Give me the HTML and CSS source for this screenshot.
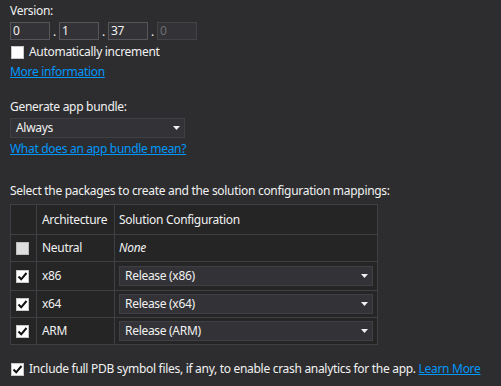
FILE: index.html
```html
<!DOCTYPE html>
<html>
<head>
<meta charset="utf-8">
<link rel="stylesheet" href="styles.css">
</head>
<body>
<div class="page">
  <div class="label">Version:</div>
  <div class="version-row">
    <span class="tb">0</span><span class="dot">.</span>
    <span class="tb">1</span><span class="dot">.</span>
    <span class="tb">37</span><span class="dot">.</span>
    <span class="tb disabled">0</span>
  </div>
  <div class="check-row auto">
    <span class="cb"></span><span>Automatically increment</span>
  </div>
  <div class="link more">More information</div>

  <div class="label gen">Generate app bundle:</div>
  <div class="combo main-combo"><span>Always</span><svg class="arrow" width="7" height="4" viewBox="0 0 7 4"><path d="M0 0H7L3.5 4Z" fill="#f1f1f1"/></svg></div>
  <div class="link bundle">What does an app bundle mean?</div>

  <div class="label sel">Select the packages to create and the solution configuration mappings:</div>
  <table class="grid">
    <tr class="hdr">
      <td class="c1"></td>
      <td class="c2">Architecture</td>
      <td class="c3">Solution Configuration</td>
    </tr>
    <tr class="r27">
      <td class="c1"><span class="cb neutral"></span></td>
      <td class="c2">Neutral</td>
      <td class="c3"><i>None</i></td>
    </tr>
    <tr class="r28">
      <td class="c1"><span class="cb checked"><svg width="11" height="11" viewBox="0 0 11 11"><path d="M1.5 5.5L4.2 8.3L9.5 2" fill="none" stroke="#111" stroke-width="2"/></svg></span></td>
      <td class="c2">x86</td>
      <td class="c3"><div class="combo"><span>Release (x86)</span><svg class="arrow" width="7" height="4" viewBox="0 0 7 4"><path d="M0 0H7L3.5 4Z" fill="#f1f1f1"/></svg></div></td>
    </tr>
    <tr class="r27">
      <td class="c1"><span class="cb checked"><svg width="11" height="11" viewBox="0 0 11 11"><path d="M1.5 5.5L4.2 8.3L9.5 2" fill="none" stroke="#111" stroke-width="2"/></svg></span></td>
      <td class="c2">x64</td>
      <td class="c3"><div class="combo"><span>Release (x64)</span><svg class="arrow" width="7" height="4" viewBox="0 0 7 4"><path d="M0 0H7L3.5 4Z" fill="#f1f1f1"/></svg></div></td>
    </tr>
    <tr class="r27">
      <td class="c1"><span class="cb checked"><svg width="11" height="11" viewBox="0 0 11 11"><path d="M1.5 5.5L4.2 8.3L9.5 2" fill="none" stroke="#111" stroke-width="2"/></svg></span></td>
      <td class="c2">ARM</td>
      <td class="c3"><div class="combo"><span>Release (ARM)</span><svg class="arrow" width="7" height="4" viewBox="0 0 7 4"><path d="M0 0H7L3.5 4Z" fill="#f1f1f1"/></svg></div></td>
    </tr>
  </table>

  <div class="check-row pdb">
    <span class="cb checked"><svg width="11" height="11" viewBox="0 0 11 11"><path d="M1.5 5.5L4.2 8.3L9.5 2" fill="none" stroke="#111" stroke-width="2"/></svg></span><span class="nowrap">Include full PDB symbol files, if any, to enable crash analytics for the app. <span class="link">Learn More</span></span>
  </div>
</div>
</body>
</html>
```
FILE: styles.css
```css
html, body {
  margin: 0;
  padding: 0;
  background: #2d2d30;
}
body {
  width: 501px;
  height: 386px;
  overflow: hidden;
}
.page {
  padding: 3px 10px 0 10px;
  font-family: "Noto Sans", sans-serif;
  font-size: 12px;
  letter-spacing: -0.3px;
  line-height: 16px;
  color: #f1f1f1;
  display: flex;
  flex-direction: column;
  align-items: flex-start;
}
.label { height: 16px; white-space: nowrap; }
.version-row {
  margin-top: 3px;
  display: flex;
  align-items: flex-end;
  height: 18px;
}
.tb {
  box-sizing: border-box;
  width: 40px;
  height: 18px;
  background: #333337;
  border: 1px solid #55555a;
  padding-left: 2px;
  line-height: 16px;
}
.tb.disabled { color: #6d6d70; border-color: #434346; }
.dot {
  width: 9px;
  text-align: center;
  line-height: 16px;
  height: 16px;
}
.check-row {
  display: flex;
  align-items: center;
  gap: 5px;
  height: 16px;
}
.check-row.auto { margin-top: 4px; padding-left: 1px; }
.cb {
  box-sizing: border-box;
  width: 13px;
  height: 13px;
  background: #ffffff;
  border: 1px solid #c8c8c8;
  display: flex;
  align-items: center;
  justify-content: center;
  flex: none;
}
.cb.neutral { background: #dedede; border-color: #bdbdbd; }
.link {
  color: #0097fb;
  text-decoration: underline;
}
.nowrap { white-space: nowrap; }
.more { margin-top: 4px; }
.gen { margin-top: 19px; }
.combo {
  box-sizing: border-box;
  height: 20px;
  background: #333337;
  border: 1px solid #3f3f46;
  display: flex;
  align-items: center;
  justify-content: space-between;
  padding: 0 4px 0 5px;
}
.main-combo { width: 175px; margin-top: 3px; }
.bundle { margin-top: 3px; }
.sel { margin-top: 26px; }
.grid {
  margin-top: 5px;
  border-collapse: collapse;
  width: 368px;
  table-layout: fixed;
}
.grid td {
  border: 1px solid #3f3f46;
  background: #252526;
  padding: 0;
  vertical-align: middle;
}
.grid .c1 { width: 25px; }
.grid .c2 { width: 78px; padding-left: 5px; box-sizing: border-box; }
.grid .c3 { padding-left: 4px; padding-right: 4px; }
.grid .c1 .cb { margin-left: 5px; }
.grid tr.hdr td { height: 29px; }
.grid tr.r27 td { height: 26px; }
.grid tr.r28 td { height: 28px; }
.grid i { font-style: italic; }
.grid .combo { width: 100%; }
.pdb { margin-top: 16px; padding-left: 1px; }
```
